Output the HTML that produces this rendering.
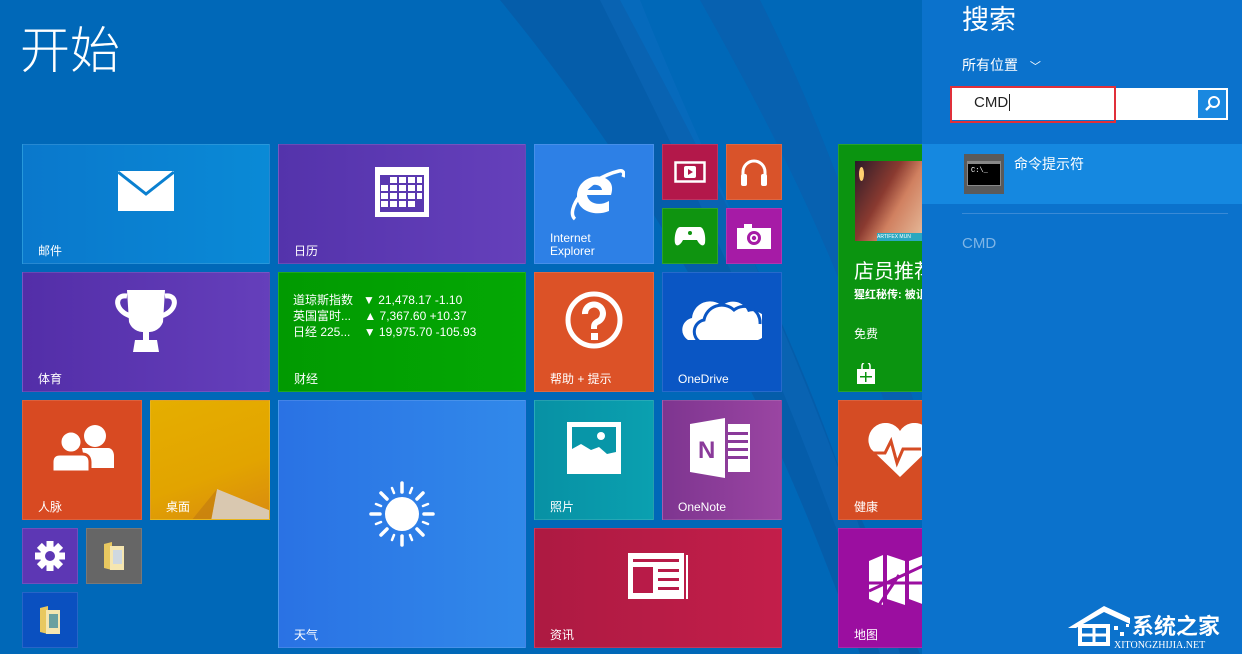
<!DOCTYPE html>
<html><head><meta charset="utf-8"><style>
*{margin:0;padding:0;box-sizing:border-box}
body{width:1242px;height:654px;overflow:hidden;position:relative;background:#0068b8;font-family:"Liberation Sans","Noto Sans CJK SC",sans-serif;color:#fff}
.t{position:absolute;border:1px solid rgba(255,255,255,0.12)}
.l{position:absolute;left:15px;bottom:5px;font-size:12px;line-height:14px}
.c{position:absolute;left:50%;top:50%;transform:translate(-50%,-50%)}
</style></head><body>
<svg style="position:absolute;left:0;top:0" width="1242" height="654">
<path d="M500 0 L620 0 C700 150 780 300 840 470 L920 654 L860 654 C780 430 680 220 500 0Z" fill="#0a4f9a" opacity="0.45"/>
<path d="M600 0 L640 0 C720 200 820 380 900 654 L880 654 C790 380 690 180 600 0Z" fill="#1270c4" opacity="0.35"/>
<path d="M700 0 L760 0 C840 160 880 300 920 420 L920 520 C860 300 790 160 700 0Z" fill="#0d5aa8" opacity="0.5"/>
</svg>
<div style="position:absolute;left:20px;top:18px;font-size:50px;font-weight:300;line-height:66px">开始</div>

<div class="t" style="left:22px;top:144px;width:248px;height:120px;background:linear-gradient(90deg,#0a78cc,#0a8ad6)">
<svg class="c" style="margin-top:-12px" width="56" height="42"><rect width="56" height="40" fill="#fff"/><path d="M0 1 L28 23 L56 1" stroke="#0a80d0" stroke-width="3" fill="none"/></svg><div class="l">邮件</div></div>
<div class="t" style="left:278px;top:144px;width:248px;height:120px;background:linear-gradient(90deg,#5433ab,#6540bb)">
<svg class="c" style="margin-top:-12px" width="54" height="50"><rect width="54" height="50" fill="#fff"/><rect x="5" y="8" width="44" height="37" fill="#5a38b0"/><g fill="#fff"><rect x="15" y="10" width="7" height="6"/><rect x="24" y="10" width="7" height="6"/><rect x="33" y="10" width="7" height="6"/><rect x="42" y="10" width="5" height="6"/><rect x="6" y="18" width="7" height="6"/><rect x="15" y="18" width="7" height="6"/><rect x="24" y="18" width="7" height="6"/><rect x="33" y="18" width="7" height="6"/><rect x="42" y="18" width="5" height="6"/><rect x="6" y="26" width="7" height="6"/><rect x="15" y="26" width="7" height="6"/><rect x="24" y="26" width="7" height="6"/><rect x="33" y="26" width="7" height="6"/><rect x="42" y="26" width="5" height="6"/><rect x="6" y="34" width="7" height="6"/><rect x="15" y="34" width="7" height="6"/><rect x="24" y="34" width="7" height="6"/><rect x="33" y="34" width="7" height="6"/></g></svg><div class="l">日历</div></div>
<div class="t" style="left:534px;top:144px;width:120px;height:120px;background:#2d80e6">
<svg style="position:absolute;left:30px;top:20px" width="60" height="60"><path d="M46 30 H22 C23 38 34 42 44 36 V46 C30 52 12 46 12 31 C12 16 28 8 40 13 C48 17 48 24 46 30Z" fill="#fff"/><path d="M22 25 H37 C36 18 24 18 22 25Z" fill="#2d80e6"/><path d="M10 54 C0 46 20 14 54 6 C58 5 60 8 58 12" stroke="#fff" stroke-width="3.5" fill="none"/></svg>
<div class="l" style="line-height:13px">Internet<br>Explorer</div></div>
<div class="t" style="left:662px;top:144px;width:56px;height:56px;background:#b3184a"><svg class="c" width="32" height="22"><rect x="1.5" y="1.5" width="29" height="19" fill="none" stroke="#fff" stroke-width="2.5"/><rect x="10" y="5" width="12" height="12" rx="2" fill="#fff"/><path d="M14 8 L19 11 L14 14Z" fill="#b3184a"/></svg></div>
<div class="t" style="left:726px;top:144px;width:56px;height:56px;background:#d9532a"><svg class="c" width="30" height="32"><path d="M4 26 V16 A11 11 0 0 1 26 16 V26" fill="none" stroke="#fff" stroke-width="3"/><rect x="2" y="18" width="6" height="12" rx="2" fill="#fff"/><rect x="22" y="18" width="6" height="12" rx="2" fill="#fff"/></svg></div>
<div class="t" style="left:662px;top:208px;width:56px;height:56px;background:#0f9410"><svg class="c" width="32" height="22"><path d="M6 2 H26 C30 2 32 12 31 18 C30 22 26 21 23 15 H9 C6 21 2 22 1 18 C0 12 2 2 6 2Z" fill="#fff"/><circle cx="16" cy="8" r="2" fill="#0f9410"/></svg></div>
<div class="t" style="left:726px;top:208px;width:56px;height:56px;background:#a61ba6"><svg class="c" width="34" height="26"><rect x="0" y="5" width="34" height="21" fill="#fff"/><rect x="7" y="1" width="8" height="6" fill="#fff"/><circle cx="17" cy="15" r="7" fill="#a61ba6"/><circle cx="17" cy="15" r="4" fill="#fff"/><circle cx="17" cy="15" r="2.2" fill="#a61ba6"/></svg></div>

<div class="t" style="left:838px;top:144px;width:84px;height:248px;background:#0b9410;border-right:none;overflow:hidden">
<div style="position:absolute;left:16px;top:16px;width:70px;height:80px;background:linear-gradient(120deg,#2a1a28,#8a3a30 40%,#d08060 60%,#e8c0a0);"></div>
<div style="position:absolute;left:20px;top:22px;width:5px;height:14px;background:#ffd070;border-radius:50%"></div>
<div style="position:absolute;left:38px;top:88px;width:50px;height:8px;background:#2aa8c0;font-size:5px;line-height:8px">ARTIFEX MUN</div>
<div style="position:absolute;left:15px;top:110px;font-size:20px;white-space:nowrap">店员推荐</div>
<div style="position:absolute;left:15px;top:141px;font-size:11px;font-weight:bold;white-space:nowrap">猩红秘传: 被诅</div>
<div style="position:absolute;left:15px;top:180px;font-size:12px">免费</div>
<svg style="position:absolute;left:16px;top:218px" width="22" height="22"><path d="M2 6 H20 V21 H2Z" fill="#fff"/><path d="M7 6 V3 A4 4 0 0 1 15 3 V6" stroke="#fff" fill="none" stroke-width="1.5"/><g fill="#0b9410"><rect x="10" y="9" width="1.5" height="10"/><rect x="5" y="13" width="12" height="1.5"/></g></svg>
</div>

<div class="t" style="left:22px;top:272px;width:248px;height:120px;background:linear-gradient(90deg,#532ea8,#653fbb)">
<svg class="c" style="margin-top:-12px" width="66" height="64"><path d="M14 2 H52 L50 34 C47 42 40 44 36 44 V52 H30 V44 C26 44 19 42 16 34Z" fill="#fff"/><path d="M14 8 C0 6 2 24 18 28 M52 8 C66 6 64 24 48 28" stroke="#fff" stroke-width="5" fill="none"/><path d="M22 52 H44 L46 64 H20Z" fill="#fff"/></svg><div class="l">体育</div></div>
<div class="t" style="left:278px;top:272px;width:248px;height:120px;background:linear-gradient(90deg,#019a01,#04a804)">
<div style="position:absolute;left:14px;top:19px;font-size:12px;line-height:16px;white-space:pre">道琼斯指数   ▼ 21,478.17 -1.10
英国富时...    ▲ 7,367.60 +10.37
日经 225...    ▼ 19,975.70 -105.93</div><div class="l">财经</div></div>
<div class="t" style="left:534px;top:272px;width:120px;height:120px;background:#dc5227">
<svg class="c" style="margin-top:-12px" width="58" height="58"><circle cx="29" cy="29" r="26" stroke="#fff" stroke-width="5" fill="none"/><path d="M20 23 A9 9 0 1 1 32 31 C29 33 29 34 29 38" stroke="#fff" stroke-width="6" fill="none"/><rect x="26" y="42" width="7" height="7" fill="#fff"/></svg><div class="l">帮助 + 提示</div></div>
<div class="t" style="left:662px;top:272px;width:120px;height:120px;background:#0a56c4">
<svg class="c" style="margin-top:-12px" width="80" height="48"><path d="M6 44 A12 12 0 0 1 10 22 A18 18 0 0 1 40 10 A16 16 0 0 1 66 16 A14 14 0 0 1 76 44Z" fill="#fff"/><path d="M18 46 A12 12 0 0 1 22 24 A18 18 0 0 1 52 14 A16 16 0 0 1 78 28" stroke="#0a56c4" stroke-width="3" fill="none"/></svg><div class="l">OneDrive</div></div>

<div class="t" style="left:22px;top:400px;width:120px;height:120px;background:#d84a22">
<svg class="c" style="margin-top:-12px" width="64" height="48"><circle cx="45" cy="12" r="11" fill="#fff"/><path d="M32 24 H58 C62 24 64 28 64 32 V44 H36Z" fill="#fff"/><circle cx="21" cy="18" r="11" fill="#fff" stroke="#d84a22" stroke-width="3"/><path d="M2 48 V38 C2 32 6 30 10 30 H32 C36 30 40 32 40 38 V48Z" fill="#fff" stroke="#d84a22" stroke-width="3"/></svg><div class="l">人脉</div></div>
<div class="t" style="left:150px;top:400px;width:120px;height:120px;background:linear-gradient(160deg,#e5ae00,#e2a400 60%,#d98a10);overflow:hidden">
<svg style="position:absolute;left:0;top:0" width="120" height="120"><path d="M60 120 L66 88 L120 110 V120Z" fill="#d9c8b0"/><path d="M40 120 L66 88 L60 120Z" fill="#c07a10" opacity=".6"/></svg><div class="l">桌面</div></div>
<div class="t" style="left:278px;top:400px;width:248px;height:248px;background:linear-gradient(90deg,#2a72e4,#3189ea)">
<svg style="position:absolute;left:90px;top:80px" width="66" height="66" viewBox="-33 -33 66 66"><circle r="17" fill="#fff"/><g stroke="#fff" stroke-width="3.5" stroke-linecap="round"><line x1="0" y1="-22" x2="0" y2="-31"/><line x1="0" y1="22" x2="0" y2="31"/><line x1="-22" y1="0" x2="-31" y2="0"/><line x1="22" y1="0" x2="31" y2="0"/><line x1="15" y1="15" x2="21" y2="21"/><line x1="-15" y1="15" x2="-21" y2="21"/><line x1="15" y1="-15" x2="21" y2="-21"/><line x1="-15" y1="-15" x2="-21" y2="-21"/></g><g stroke="#fff" stroke-width="2.5" stroke-linecap="round"><line x1="8" y1="-21" x2="10" y2="-26"/><line x1="-8" y1="-21" x2="-10" y2="-26"/><line x1="8" y1="21" x2="10" y2="26"/><line x1="-8" y1="21" x2="-10" y2="26"/><line x1="21" y1="8" x2="26" y2="10"/><line x1="-21" y1="8" x2="-26" y2="10"/><line x1="21" y1="-8" x2="26" y2="-10"/><line x1="-21" y1="-8" x2="-26" y2="-10"/></g></svg><div class="l">天气</div></div>
<div class="t" style="left:534px;top:400px;width:120px;height:120px;background:linear-gradient(90deg,#0891a4,#0aa0b0)">
<svg class="c" style="margin-top:-12px" width="54" height="52"><rect width="54" height="52" fill="#fff"/><rect x="5" y="5" width="44" height="38" fill="#0896a8"/><path d="M5 43 V27 L14 22 L24 28 L32 25 L40 32 L49 30 V43Z" fill="#fff"/><circle cx="34" cy="14" r="4" fill="#fff"/></svg><div class="l">照片</div></div>
<div class="t" style="left:662px;top:400px;width:120px;height:120px;background:linear-gradient(90deg,#7e3590,#9a45a2)">
<svg class="c" style="margin-top:-12px" width="64" height="60"><path d="M0 6 L35 0 V60 L0 54Z" fill="#fff"/><text x="8" y="40" font-family="Liberation Sans" font-weight="bold" font-size="24" fill="#8a3a9a">N</text><rect x="38" y="6" width="22" height="48" fill="#fff"/><g fill="#8a3a9a"><rect x="38" y="14" width="20" height="3"/><rect x="38" y="22" width="20" height="3"/><rect x="38" y="30" width="20" height="3"/><rect x="38" y="38" width="20" height="3"/></g></svg><div class="l">OneNote</div></div>
<div class="t" style="left:838px;top:400px;width:84px;height:120px;background:#d54c24;border-right:none;overflow:hidden">
<svg style="position:absolute;left:26px;top:22px" width="70" height="56"><path d="M35 54 L6 26 A14 14 0 0 1 35 8 A14 14 0 0 1 64 26Z" fill="#fff"/><path d="M0 30 H20 L26 18 L32 40 L38 26 H56" stroke="#d54c24" stroke-width="3" fill="none"/></svg><div class="l">健康</div></div>
<div class="t" style="left:22px;top:528px;width:56px;height:56px;background:#5d37b4"><svg class="c" width="30" height="30" viewBox="-15 -15 30 30"><g fill="#fff"><circle r="10"/><rect x="-3.5" y="-15" width="7" height="30"/><rect x="-15" y="-3.5" width="30" height="7"/><rect x="-3.5" y="-15" width="7" height="30" transform="rotate(45)"/><rect x="-3.5" y="-15" width="7" height="30" transform="rotate(-45)"/></g><circle r="5" fill="#5d37b4"/></svg></div>
<div class="t" style="left:86px;top:528px;width:56px;height:56px;background:#666"><svg class="c" width="24" height="32"><path d="M2 4 L10 2 V30 L2 28Z" fill="#e8c860"/><rect x="8" y="6" width="14" height="24" fill="#f5e6b0"/><rect x="11" y="10" width="9" height="14" fill="#cfd8e0"/></svg></div>
<div class="t" style="left:22px;top:592px;width:56px;height:56px;background:#0a50c0"><svg class="c" width="24" height="32"><path d="M2 4 L10 2 V30 L2 28Z" fill="#e8c860"/><rect x="8" y="6" width="14" height="24" fill="#f5e6b0"/><rect x="11" y="10" width="9" height="14" fill="#6aa0a0"/></svg></div>
<div class="t" style="left:534px;top:528px;width:248px;height:120px;background:linear-gradient(90deg,#ad1a42,#c31e4a)">
<svg class="c" style="margin-top:-12px" width="60" height="46"><rect width="56" height="46" fill="#fff"/><rect x="58" y="2" width="2" height="44" fill="#fff"/><g fill="#b81b48"><rect x="5" y="6" width="46" height="3"/><rect x="5" y="14" width="20" height="26"/><rect x="30" y="16" width="21" height="3"/><rect x="30" y="25" width="21" height="3"/><rect x="30" y="34" width="21" height="3"/></g></svg><div class="l">资讯</div></div>
<div class="t" style="left:838px;top:528px;width:84px;height:120px;background:#9b0ea0;border-right:none;overflow:hidden">
<svg style="position:absolute;left:30px;top:26px" width="60" height="50"><path d="M0 6 L14 0 V50 L0 44Z M18 0 L36 6 V50 L18 44Z M40 6 L56 0 V50 L40 44Z" fill="#fff"/><path d="M0 36 L56 10 M0 28 H56 M10 50 L30 20" stroke="#9b0ea0" stroke-width="3"/></svg><div class="l">地图</div></div>

<div style="position:absolute;left:922px;top:0;width:320px;height:654px;background:#0b72cc">
<div style="position:absolute;left:40px;top:2px;font-size:27px;line-height:36px">搜索</div>
<div style="position:absolute;left:40px;top:55px;font-size:14px">所有位置 <span style="font-size:11px;margin-left:8px">﹀</span></div>
<div style="position:absolute;left:30px;top:88px;width:276px;height:32px;background:#fff"></div>
<div style="position:absolute;left:28px;top:86px;width:166px;height:37px;border:2px solid #e0303a"></div>
<div style="position:absolute;left:52px;top:94px;font-size:15px;color:#222">CMD<span style="border-left:1px solid #222;margin-left:1px"></span></div>
<div style="position:absolute;left:276px;top:90px;width:28px;height:28px;background:#1a88e0"><svg width="28" height="28"><circle cx="16" cy="12" r="5" stroke="#fff" stroke-width="2" fill="none"/><path d="M12.5 15.5 L8 20" stroke="#fff" stroke-width="2.5"/></svg></div>
<div style="position:absolute;left:0;top:144px;width:320px;height:60px;background:#1588e0"></div>
<div style="position:absolute;left:42px;top:154px;width:40px;height:40px;background:#5a5a5a"><div style="position:absolute;left:3px;top:7px;width:34px;height:25px;background:#000;border:1px solid #888;border-top:3px solid #888;font-family:'Liberation Mono';font-size:7px;color:#fff;padding:3px">C:\_</div></div>
<div style="position:absolute;left:92px;top:154px;font-size:14px">命令提示符</div>
<div style="position:absolute;left:40px;top:213px;width:266px;height:1px;background:#3a8ad6"></div>
<div style="position:absolute;left:40px;top:235px;font-size:15px;color:#7fb5e6">CMD</div>
<svg style="position:absolute;left:142px;top:596px" width="178" height="58"><path d="M4 32 L40 10 L66 22 L66 28 L40 16 L12 32Z" fill="#fff"/><path d="M16 30 H44 V48 H16Z" fill="none" stroke="#fff" stroke-width="4"/><path d="M30 30 V48 M16 39 H44" stroke="#fff" stroke-width="3"/><g fill="#fff"><rect x="50" y="30" width="4" height="4"/><rect x="56" y="36" width="4" height="4"/><rect x="62" y="28" width="3" height="3"/></g><text x="68" y="38" font-family="Liberation Sans,Noto Sans CJK SC" font-weight="bold" font-size="22" fill="#fff">系统之家</text><text x="50" y="52" font-family="Liberation Serif" font-size="10" fill="#fff">XITONGZHIJIA.NET</text></svg>
</div>
</body></html>
